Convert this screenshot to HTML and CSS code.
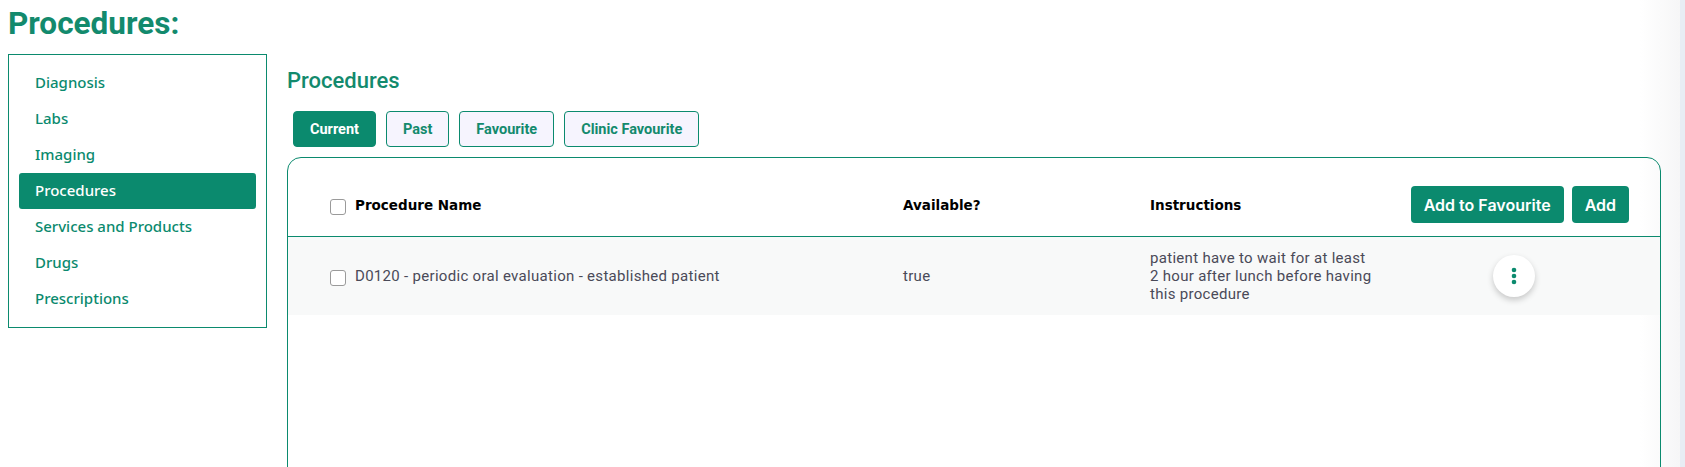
FILE: index.html
```html
<!DOCTYPE html>
<html lang="en">
<head>
    <meta charset="UTF-8">
    <title>Procedures</title>
    <link rel="stylesheet" href="styles.css">
</head>
<body>
    <h1 class="page-title">Procedures:</h1>
    <div class="layout">
        <ul class="side-menu">
            <li class="menu-item">Diagnosis</li>
            <li class="menu-item">Labs</li>
            <li class="menu-item">Imaging</li>
            <li class="menu-item active">Procedures</li>
            <li class="menu-item">Services and Products</li>
            <li class="menu-item">Drugs</li>
            <li class="menu-item">Prescriptions</li>
        </ul>

        <div class="main">
            <h2 class="section-title">Procedures</h2>
            <div class="tabs">
                <button class="tab active">Current</button>
                <button class="tab">Past</button>
                <button class="tab">Favourite</button>
                <button class="tab">Clinic Favourite</button>
            </div>

            <div class="card">
                <div class="row head-row">
                    <div class="cell name-cell"><span class="check"></span>Procedure Name</div>
                    <div class="cell">Available?</div>
                    <div class="cell">Instructions</div>
                    <div class="cell actions">
                        <button class="btn">Add to Favourite</button>
                        <button class="btn">Add</button>
                    </div>
                </div>
                <div class="row body-row">
                    <div class="cell name-cell"><span class="check"></span>D0120 - periodic oral evaluation - established patient</div>
                    <div class="cell">true</div>
                    <div class="cell"><span class="note">patient have to wait for at least 2 hour after lunch before having this procedure</span></div>
                    <div class="cell kebab-cell">
                        <span class="kebab">
                            <svg width="6" height="18" viewBox="0 0 6 18">
                                <circle cx="3" cy="3" r="2.3" fill="#0b8a6e"/>
                                <circle cx="3" cy="9" r="2.3" fill="#0b8a6e"/>
                                <circle cx="3" cy="15" r="2.3" fill="#0b8a6e"/>
                            </svg>
                        </span>
                    </div>
                </div>
            </div>
        </div>
    </div>
</body>
</html>
```

FILE: styles.css
```css
html {
    overflow: hidden;
}
body {
    margin: 0;
    padding: 0 24px 0 8px;
    font-family: Roboto, "Liberation Sans", sans-serif;
    color: #4a4a58;
    background: linear-gradient(to right, #fff calc(100% - 45px), #f6f6f7 calc(100% - 5px), #e8edf4 calc(100% - 5px));
}
.page-title {
    margin: 6px 0 12px;
    font-size: 31.5px;
    line-height: 36px;
    font-weight: 700;
    color: #138a6d;
}
.layout {
    display: flex;
    gap: 20px;
    align-items: flex-start;
}
.side-menu {
    list-style: none;
    margin: 0;
    padding: 10px 10px;
    width: 237px;
    border: 1px solid #0b8a6e;
    flex-shrink: 0;
}
.menu-item {
    height: 36px;
    line-height: 35px;
    padding-left: 16px;
    font-family: "Noto Sans", sans-serif;
    font-size: 15px;
    font-weight: 500;
    color: #0b8a6e;
    border-radius: 3px;
}
.menu-item.active {
    background-color: #0b8a6e;
    color: #fff;
}
.main {
    flex: 1;
}
.section-title {
    margin: 13px 0 16px;
    font-size: 22px;
    line-height: 28px;
    font-weight: 500;
    color: #138a6d;
}
.tabs {
    display: flex;
    gap: 10px;
    padding-left: 6px;
    margin-bottom: 10px;
}
.tab {
    height: 36px;
    padding: 0 16px;
    font-family: Roboto, sans-serif;
    font-size: 14.5px;
    font-weight: 700;
    color: #138a6d;
    background-color: #f6f4fe;
    border: 1px solid #0b8a6e;
    border-radius: 4px;
}
.tab.active {
    background-color: #0b8a6e;
    color: #fff;
}
.card {
    border: 1px solid #0b8a6e;
    border-radius: 14px 14px 0 0;
    padding-top: 15px;
    min-height: 320px;
}
.row {
    display: grid;
    grid-template-columns: 573px 247px 248px 1fr;
    padding: 0 31px 0 42px;
    align-items: center;
}
.head-row {
    height: 63px;
    border-bottom: 1px solid #0b8a6e;
    font-family: "DejaVu Sans", sans-serif;
    font-size: 13.5px;
    font-weight: 700;
    color: #000;
}
.body-row {
    height: 78px;
    background-color: #f8f9f9;
    font-size: 15px;
    line-height: 18px;
    letter-spacing: 0.3px;
}
.name-cell {
    display: flex;
    align-items: center;
}
.check {
    width: 14px;
    height: 14px;
    border: 1px solid #9a9a9a;
    border-radius: 3px;
    background: #fff;
    margin: 4px 9px 0 0;
    flex-shrink: 0;
}
.note {
    display: block;
    width: 224px;
}
.actions {
    display: flex;
    justify-content: flex-end;
    gap: 8px;
}
.btn {
    height: 37px;
    padding: 0 13px;
    font-family: Inter, sans-serif;
    font-size: 16px;
    font-weight: 600;
    color: #fff;
    background-color: #0b8a6e;
    border: none;
    border-radius: 4px;
}
.kebab-cell {
    display: flex;
    justify-content: center;
}
.kebab {
    width: 42px;
    height: 42px;
    border-radius: 50%;
    background: #fff;
    box-shadow: 0 3px 6px rgba(0, 0, 0, 0.2);
    display: flex;
    justify-content: center;
    align-items: center;
}
```
